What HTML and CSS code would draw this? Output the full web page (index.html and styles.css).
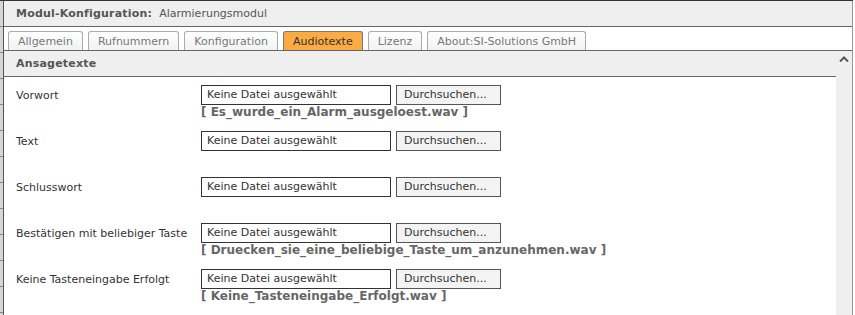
FILE: index.html
```html
<!DOCTYPE html>
<html lang="de">
<head>
  <meta charset="UTF-8">
  <title>Modul-Konfiguration</title>
  <link rel="stylesheet" href="styles.css">
</head>
<body>
  <div class="frame">
    <div class="side-strip"></div>

    <div class="panel">
      <div class="title-bar">
        <b>Modul-Konfiguration:</b>&nbsp; Alarmierungsmodul
      </div>

      <!-- Tabs -->
      <div class="tabs">
        <span class="tab">Allgemein</span>
        <span class="tab">Rufnummern</span>
        <span class="tab">Konfiguration</span>
        <span class="tab active">Audiotexte</span>
        <span class="tab">Lizenz</span>
        <span class="tab">About:SI-Solutions GmbH</span>
      </div>

      <div class="section">
        <div class="section-main">
          <div class="section-head">Ansagetexte</div>

          <div class="rows">
            <div class="row">
              <label class="row-label">Vorwort</label>
              <div class="row-field">
                <div class="file-input">
                  <span class="file-name">Keine Datei ausgewählt</span>
                  <span class="file-button">Durchsuchen...</span>
                </div>
                <div class="current-file">[ Es_wurde_ein_Alarm_ausgeloest.wav ]</div>
              </div>
            </div>

            <div class="row">
              <label class="row-label">Text</label>
              <div class="row-field">
                <div class="file-input">
                  <span class="file-name">Keine Datei ausgewählt</span>
                  <span class="file-button">Durchsuchen...</span>
                </div>
                <div class="current-file"></div>
              </div>
            </div>

            <div class="row">
              <label class="row-label">Schlusswort</label>
              <div class="row-field">
                <div class="file-input">
                  <span class="file-name">Keine Datei ausgewählt</span>
                  <span class="file-button">Durchsuchen...</span>
                </div>
                <div class="current-file"></div>
              </div>
            </div>

            <div class="row">
              <label class="row-label">Bestätigen mit beliebiger Taste</label>
              <div class="row-field">
                <div class="file-input">
                  <span class="file-name">Keine Datei ausgewählt</span>
                  <span class="file-button">Durchsuchen...</span>
                </div>
                <div class="current-file">[ Druecken_sie_eine_beliebige_Taste_um_anzunehmen.wav ]</div>
              </div>
            </div>

            <div class="row">
              <label class="row-label">Keine Tasteneingabe Erfolgt</label>
              <div class="row-field">
                <div class="file-input">
                  <span class="file-name">Keine Datei ausgewählt</span>
                  <span class="file-button">Durchsuchen...</span>
                </div>
                <div class="current-file">[ Keine_Tasteneingabe_Erfolgt.wav ]</div>
              </div>
            </div>
          </div>
        </div>

        <!-- scroll column -->
        <div class="scroll-col">
          <svg class="scroll-up" width="10" height="6" viewBox="0 0 10 6">
            <path d="M1 5.5 L5 1.5 L9 5.5" fill="none" stroke="#555" stroke-width="2"/>
          </svg>
        </div>
      </div>
    </div>
  </div>
</body>
</html>
```

FILE: styles.css
```css
body {
  margin: 0;
  font-family: 'DejaVu Sans', Verdana, sans-serif;
  font-size: 11px;
  color: #444;
  background-color: #fff;
  overflow: hidden;
}

.frame {
  display: flex;
  height: 315px;
  width: 853px;
  border-top: 1px solid #333;
  box-sizing: border-box;
}

.side-strip {
  width: 3px;
  flex-shrink: 0;
  background: repeating-linear-gradient(to bottom, #d6d6d6 0, #d6d6d6 25px, #888 25px, #888 26px);
  border-right: 1px solid #555;
}

.panel {
  flex: 1;
  display: flex;
  flex-direction: column;
  border-right: 1px solid #999;
}

.title-bar {
  height: 25px;
  line-height: 25px;
  padding-left: 12px;
  background-color: #efefef;
  border-bottom: 1px solid #666;
  color: #555;
  font-size: 11px;
}

.title-bar b {
  color: #555;
  letter-spacing: 0.2px;
}

.tabs {
  height: 25px;
  display: flex;
  align-items: flex-end;
  gap: 5px;
  padding-left: 4px;
  border-bottom: 1px solid #666;
}

.tab {
  height: 18px;
  line-height: 19px;
  padding: 0 9px;
  border: 1px solid #aaa;
  border-bottom: none;
  border-radius: 3px 3px 0 0;
  background: linear-gradient(#fff, #f2f2f2);
  color: #777;
  font-size: 11px;
}

.tab.active {
  background: #fbab42;
  border-color: #777;
  color: #333;
}

.section {
  flex: 1;
  display: flex;
}

.section-main {
  flex: 1;
  display: flex;
  flex-direction: column;
}

.section-head {
  height: 25px;
  line-height: 25px;
  padding-left: 12px;
  background-color: #efefef;
  border-bottom: 1px solid #666;
  font-weight: bold;
  color: #555;
  letter-spacing: 0.2px;
}

.rows {
  padding-top: 8px;
  display: flex;
  flex-direction: column;
}

.row {
  display: flex;
  height: 46px;
}

.row-label {
  width: 185px;
  padding-left: 12px;
  padding-top: 4px;
  color: #333;
}

.row-field {
  display: flex;
  flex-direction: column;
}

.file-input {
  display: flex;
  gap: 5px;
}

.file-name {
  width: 183px;
  height: 18px;
  line-height: 18px;
  padding-left: 5px;
  border: 1px solid #333;
  color: #333;
}

.file-button {
  width: 96px;
  height: 18px;
  line-height: 18px;
  padding-left: 7px;
  border: 1px solid #555;
  background-color: #f3f3f3;
  color: #333;
}

.current-file {
  height: 15px;
  line-height: 15px;
  font-size: 12px;
  font-weight: bold;
  color: #666;
}

.scroll-col {
  width: 16px;
  background-color: #efefef;
  display: flex;
  justify-content: center;
  align-items: flex-start;
  padding-top: 5px;
}
```
